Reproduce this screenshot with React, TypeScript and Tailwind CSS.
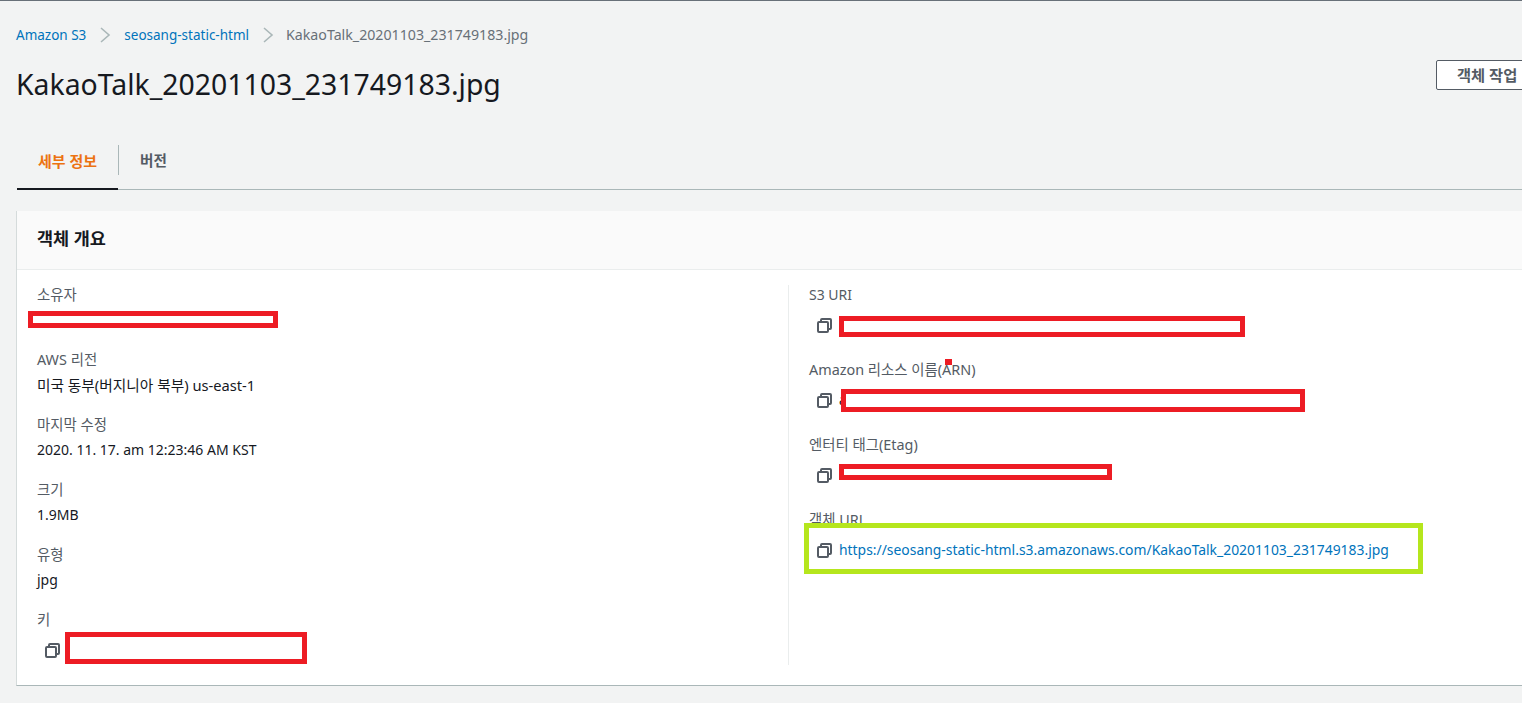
const FONT = "font-['Noto_Sans','Noto_Sans_CJK_KR',sans-serif]"

function CopyIcon() {
  return (
    <svg width="15" height="15" viewBox="0 0 15 15" fill="none" stroke="#545b64" strokeWidth="2" className="shrink-0">
      <rect x="1" y="4" width="10" height="10" rx="1" />
      <path d="M4 4V2a1 1 0 0 1 1-1h8a1 1 0 0 1 1 1v8a1 1 0 0 1-1 1h-2" />
    </svg>
  )
}

function Chevron() {
  return (
    <svg width="12" height="16" viewBox="0 0 12 16" fill="none" stroke="#aab7b8" strokeWidth="1.6" className="shrink-0">
      <path d="M2 1l8 7-8 7" />
    </svg>
  )
}

function Label({ children }: { children: React.ReactNode }) {
  return <div className="h-5 text-[14.4px] leading-[20px] text-[#545b64]">{children}</div>
}

function Field({ label, value }: { label: string; value: React.ReactNode }) {
  return (
    <div className="h-[47px]">
      <Label>{label}</Label>
      <div className="mt-[5px] text-sm leading-5 text-[#16191f]">{value}</div>
    </div>
  )
}

function CopyField({ label, value, href }: { label: React.ReactNode; value?: string; href?: boolean }) {
  return (
    <div>
      <Label>{label}</Label>
      <div className="mt-[10px] flex h-5 items-center gap-[7px] pl-2 text-[13.9px] leading-5">
        <CopyIcon />
        {value && <span className={href ? 'text-[#0073bb]' : 'text-[#16191f]'}>{value}</span>}
      </div>
    </div>
  )
}

// paint marks drawn over the screenshot
const MARKS = [
  'left-[28px] top-[311px] h-[17px] w-[250px] border-[5px] border-[#ed1c24] bg-white',
  'left-[65px] top-[632px] h-[32px] w-[242px] border-[5px] border-[#ed1c24] bg-white',
  'left-[839px] top-[316px] h-[21px] w-[406px] border-[5px] border-[#ed1c24] bg-white',
  'left-[841px] top-[389px] h-[23px] w-[464px] border-[5px] border-[#ed1c24] bg-white',
  'left-[839px] top-[464px] h-[16px] w-[273px] border-[5px] border-[#ed1c24] bg-white',
  'left-[945px] top-[359px] h-[6px] w-[7px] bg-[#ed1c24]',
  'left-[804px] top-[523px] h-[51px] w-[619px] border-[5px] border-[#b5e61d]',
]

export default function App() {
  return (
    <div className={`relative h-[703px] w-[1522px] overflow-hidden bg-[#f2f3f3] ${FONT}`}>
      <div className="h-px bg-[#687078]" />
      <div className="pl-[17px]">
        <nav className="-ml-px mt-[24px] flex h-[20px] items-center text-[13.5px]">
          <a className="text-[#0073bb]">Amazon S3</a>
          <span className="mx-[13px]"><Chevron /></span>
          <a className="text-[#0073bb]">seosang-static-html</a>
          <span className="ml-[13px] mr-[12px]"><Chevron /></span>
          <span className="text-[14.2px] text-[#687078]">KakaoTalk_20201103_231749183.jpg</span>
        </nav>

        <div className="mt-[15px] flex h-[60px] items-start justify-between">
          <h1 className="-ml-px text-[28.4px] leading-[48px] font-normal text-[#16191f]">KakaoTalk_20201103_231749183.jpg</h1>
          <button className="-mr-[34px] h-[30px] w-[120px] shrink-0 rounded-[2px] border border-[#545b64] bg-white pl-[20px] text-left text-[15.3px] font-bold text-[#545b64]">객체 작업</button>
        </div>

        <div className="mt-[24px] flex h-[46px] border-b border-[#aab7b8]">
          <div className="flex h-[46px] w-[101px] items-start border-b-[2px] border-[#16191f] pl-[21px] pt-[6px] text-[15px] font-bold text-[#ec7211]">
            세부 정보
          </div>
          <div className="mt-px h-[30px] w-px bg-[#aab7b8]" />
          <div className="pl-[21px] pt-[6px] text-[14.6px] font-bold text-[#545b64]">버전</div>
        </div>

        <section className="-ml-px mt-[21px] w-[1600px] border-b border-l border-[#aab7b8] border-l-[#d5dbdb] bg-white">
          <header className="flex h-[59px] items-center border-b border-[#eaeded] bg-[#fafafa] pb-[3px] pl-5 text-[17.5px] font-bold text-[#16191f]">객체 개요</header>
          <div className="grid h-[415px] grid-cols-[771px_1fr] pt-[15px] pb-[20px]">
            <div className="flex flex-col gap-[18px] pl-5">
              <Field label="소유자" value="" />
              <Field label="AWS 리전" value={<span className="text-[14.7px]">미국 동부(버지니아 북부) us-east-1</span>} />
              <Field label="마지막 수정" value="2020. 11. 17. am 12:23:46 AM KST" />
              <Field label="크기" value="1.9MB" />
              <Field label="유형" value="jpg" />
              <CopyField label="키" />
            </div>
            <div className="flex flex-col gap-[25px] border-l border-[#eaeded] pl-5">
              <CopyField label={<span className="text-sm">S3 URI</span>} />
              <CopyField label="Amazon 리소스 이름(ARN)" value="a" />
              <CopyField label="엔터티 태그(Etag)" />
              <CopyField label="객체 URL" value="https://seosang-static-html.s3.amazonaws.com/KakaoTalk_20201103_231749183.jpg" href />
            </div>
          </div>
        </section>
      </div>

      {MARKS.map((m) => (
        <div key={m} className={`absolute box-border ${m}`} />
      ))}
    </div>
  )
}
